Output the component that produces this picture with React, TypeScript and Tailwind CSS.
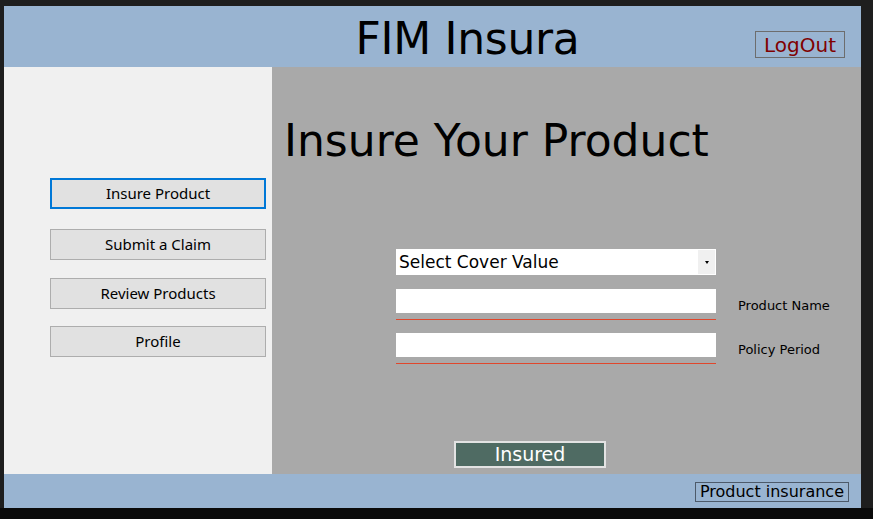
import React from 'react';

const tahoma = { fontFamily: '"DejaVu Sans", Tahoma, sans-serif' };

const NavButton: React.FC<{ label: string; active?: boolean; className?: string }> = ({ label, active, className }) => (
  <button
    className={
      (active
        ? 'w-[216px] h-[31px] bg-[#e1e1e1] border-2 border-[#0078d7] text-[15px] text-black font-["Noto_Sans",sans-serif] '
        : 'w-[216px] h-[31px] bg-[#e1e1e1] border border-[#adadad] text-[15px] text-black font-["Noto_Sans",sans-serif] ') +
      (className ?? '')
    }
  >
    {label}
  </button>
);

const FieldRow: React.FC<{ label: string }> = ({ label }) => (
  <div className="flex items-start">
    <div className="w-[320px] h-[31px] border-b border-[#e0472c]">
      <input className="w-full h-[24px] bg-white outline-none border-0" />
    </div>
    <span className="ml-[22px] mt-[7px] text-[13px] text-black" style={tahoma}>
      {label}
    </span>
  </div>
);

export default function App() {
  return (
    <div className="w-[873px] h-[519px] bg-[#1e1e1e] overflow-hidden relative">
      <div className="absolute left-0 right-0 bottom-0 h-[11px] bg-[#0a0a0a]" />
      <div className="relative ml-[4px] pt-[6px] w-[857px]">
        {/* header */}
        <div className="h-[61px] bg-[#99b4d1] relative flex items-center justify-center">
          <h1 className="text-[44px] leading-none text-black ml-[70px] mt-[5px] tracking-[-0.3px]" style={tahoma}>
            FIM Insura
          </h1>
          <button
            className="absolute left-[751px] top-[25px] w-[90px] h-[27px] border border-[#6d6d6d] text-[#800000] text-[20px] leading-none"
            style={tahoma}
          >
            LogOut
          </button>
        </div>

        {/* body */}
        <div className="h-[407px] flex">
          <div className="w-[268px] bg-[#f0f0f0] pt-[111px] pl-[46px] flex flex-col">
            <NavButton label="Insure Product" active />
            <NavButton label="Submit a Claim" className="mt-[20px]" />
            <NavButton label="Review Products" className="mt-[18px]" />
            <NavButton label="Profile" className="mt-[17px]" />
          </div>
          <div className="flex-1 bg-[#a9a9a9] flex flex-col">
            <h2 className="ml-[12px] mt-[52px] text-[44px] leading-none text-black" style={tahoma}>
              Insure Your Product
            </h2>
            <div className="ml-[124px] mt-[86px] flex flex-col">
              <div className="w-[320px] h-[26px] bg-white flex items-center">
                <span className="flex-1 pl-[3px] text-[17px] leading-[26px] text-black" style={tahoma}>
                  Select Cover Value
                </span>
                <span className="w-[17px] h-[24px] bg-[#f0f0f0] flex items-center justify-center mr-[1px]">
                  <span className="w-0 h-0 border-l-[2.5px] border-r-[2.5px] border-t-[3px] border-l-transparent border-r-transparent border-t-black" />
                </span>
              </div>
              <div className="mt-[14px]">
                <FieldRow label="Product Name" />
              </div>
              <div className="mt-[13px]">
                <FieldRow label="Policy Period" />
              </div>
            </div>
            <div className="mt-auto mb-[6px] ml-[182px]">
              <button
                className="w-[152px] h-[27px] bg-[#4f6b63] border-2 border-[#e3e3e3] text-white text-[19px] leading-none"
                style={tahoma}
              >
                Insured
              </button>
            </div>
          </div>
        </div>

        {/* footer */}
        <div className="h-[34px] bg-[#99b4d1] flex justify-end items-start pt-[8px] pr-[12px]">
          <span className="h-[20px] px-[4px] border border-[#4d5a6a] text-[16px] leading-[18px] text-black" style={tahoma}>
            Product insurance
          </span>
        </div>
      </div>
    </div>
  );
}
